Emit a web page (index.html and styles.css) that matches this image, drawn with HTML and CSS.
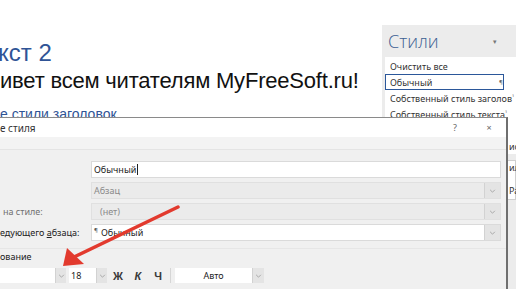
FILE: index.html
```html
<!DOCTYPE html>
<html lang="ru">

<head>
    <meta charset="UTF-8">
    <meta name="viewport" content="width=device-width, initial-scale=1.0">
    <title>Изменение стиля</title>
    <link rel="stylesheet" href="styles.css">
</head>

<body>

    <div class="doc">
        <div class="title2">кст 2</div>
        <p class="hello">ивет всем читателям MyFreeSoft.ru!</p>
        <p class="link">е стили заголовок</p>
    </div>

    <aside class="pane">
        <div class="pane-head"><span class="pane-name">Стили</span><span class="pin">▾</span></div>
        <ul class="style-list">
            <li>Очистить все</li>
            <li class="current"><span>Обычный</span><span class="mark">¶</span></li>
            <li><span>Собственный стиль заголов</span><span class="mark">¹</span></li>
            <li><span>Собственный стиль текста</span><span class="mark">¹</span></li>
            <li class="peek">ио</li>
        </ul>
        <div class="pane-box">
            <div class="peek">ил</div>
            <div class="peek">Ра</div>
        </div>
    </aside>

    <section class="dialog">
        <header class="dlg-title">
            <span class="dlg-name">е стиля</span>
            <button class="dlg-btn">?</button>
            <button class="dlg-btn">×</button>
        </header>
        <div class="dlg-body">
            <div class="group-top"></div>
            <div class="form">
                <label></label>
                <div class="field">Обычный<span class="caret"></span></div>

                <label></label>
                <div class="field off">
                    <span class="val">Абзац</span>
                    <span class="drop"><svg width="7" height="4" viewBox="0 0 8 5"><path d="M1 1l3 3 3-3" fill="none" stroke="#9a9a9a"/></svg></span>
                </div>

                <label class="dim">на стиле:</label>
                <div class="field off">
                    <span class="val indent">(нет)</span>
                    <span class="drop"><svg width="7" height="4" viewBox="0 0 8 5"><path d="M1 1l3 3 3-3" fill="none" stroke="#9a9a9a"/></svg></span>
                </div>

                <label><span>едующего <u>а</u>бзаца:</span></label>
                <div class="field">
                    <span class="val"><sup class="para">¶</sup>Обычный</span>
                    <span class="drop"><svg width="7" height="4" viewBox="0 0 8 5"><path d="M1 1l3 3 3-3" fill="none" stroke="#9a9a9a"/></svg></span>
                </div>
            </div>

            <div class="group-label">ование</div>

            <div class="toolbar">
                <div class="combo font-box">
                    <span class="box"></span>
                    <span class="drop"><svg width="7" height="4" viewBox="0 0 8 5"><path d="M1 1l3 3 3-3" fill="none" stroke="#9a9a9a"/></svg></span>
                </div>
                <div class="combo size-box">
                    <span class="box">18</span>
                    <span class="drop"><svg width="7" height="4" viewBox="0 0 8 5"><path d="M1 1l3 3 3-3" fill="none" stroke="#9a9a9a"/></svg></span>
                </div>
                <span class="fmt">Ж</span>
                <span class="fmt italic">К</span>
                <span class="fmt">Ч</span>
                <span class="sep"></span>
                <div class="combo color-box">
                    <span class="box">Авто</span>
                    <span class="drop"><svg width="7" height="4" viewBox="0 0 8 5"><path d="M1 1l3 3 3-3" fill="none" stroke="#9a9a9a"/></svg></span>
                </div>
            </div>
        </div>
    </section>

    <svg class="arrow" width="516" height="289" viewBox="0 0 516 289">
        <line x1="178" y1="207" x2="74" y2="257" stroke="#e23a2e" stroke-width="3.5" stroke-linecap="round"/>
        <polygon points="63,266 67,248 84,264" fill="#e23a2e"/>
    </svg>

</body>

</html>
```

FILE: styles.css
```css
body {
    margin: 0;
    width: 516px;
    height: 289px;
    overflow: hidden;
    position: relative;
    background-color: #ffffff;
    font-family: 'Liberation Sans', Arial, sans-serif;
}

.doc {
    padding-top: 39px;
}

.title2 {
    margin-left: -2px;
    font-size: 24px;
    line-height: 28px;
    color: #2f5496;
}

.hello {
    margin: 0;
    font-size: 22px;
    line-height: 28px;
    letter-spacing: -0.2px;
    color: #111111;
}

.link {
    margin: 9px 0 0 0;
    font-size: 14px;
    line-height: 20px;
    color: #2f5496;
}

/* панель стилей справа */

.pane {
    position: absolute;
    left: 382px;
    top: 25px;
    right: 0;
    bottom: 0;
    background-color: #ececec;
    font-family: 'Noto Sans', sans-serif;
    font-size: 9px;
    color: #333333;
}

.pane-head {
    height: 32px;
    display: flex;
    align-items: center;
    padding: 0 19px 0 6px;
}

.pane-name {
    flex: 1;
    font-family: 'Open Sans', sans-serif;
    font-weight: 300;
    font-size: 18px;
    color: #3d5f93;
}

.pin {
    font-size: 7px;
    color: #777777;
}

.style-list {
    list-style: none;
    margin: 0 0 0 3px;
    padding: 1px 0 0 0;
    background-color: #ffffff;
}

.style-list li {
    height: 16px;
    display: flex;
    align-items: center;
    padding-left: 5px;
    margin-right: 12px;
    box-sizing: border-box;
    white-space: nowrap;
}

.style-list .current {
    border: 1px solid #2b579a;
    padding-left: 4px;
}

.mark {
    margin-left: auto;
    font-size: 6px;
    color: #666666;
}

.style-list li.peek {
    margin-top: 16px;
    padding-left: 124px;
}

.pane-box {
    margin: 6px 0 0 123px;
    height: 40px;
    background-color: #ffffff;
    border: 1px solid #cfcfcf;
    box-sizing: border-box;
}

.pane-box .peek {
    padding-left: 3px;
    line-height: 12px;
    white-space: nowrap;
}

.pane-box .peek:first-child {
    margin-top: 1px;
}

.pane-box .peek + .peek {
    margin-top: 11px;
}

/* диалог */

.dialog {
    position: absolute;
    left: -10px;
    top: 117px;
    width: 515px;
    height: 171px;
    border: 1px solid #8a8a8a;
    border-right: 2px solid #6f6f6f;
    border-bottom: 0;
    background-color: #f0f0f0;
    font-family: 'Noto Sans', sans-serif;
    font-size: 9px;
    color: #222222;
    overflow: hidden;
    z-index: 2;
}

.dlg-title {
    height: 19px;
    display: flex;
    align-items: center;
    padding-left: 9px;
    background-color: #ffffff;
}

.dlg-name {
    flex: 1;
    font-size: 10px;
    color: #333333;
}

.dlg-btn {
    width: 34px;
    height: 19px;
    padding: 0;
    border: 0;
    background: none;
    font-family: 'Noto Sans', sans-serif;
    font-size: 9px;
    color: #666666;
}

.group-top {
    height: 12px;
    background-color: #f3f3f3;
    border-bottom: 1px solid #e4e4e4;
}

.form {
    display: grid;
    grid-template-columns: 100px 410px;
    grid-auto-rows: 17px;
    row-gap: 4px;
    margin-top: 11px;
}

.form label {
    display: flex;
    align-items: center;
    padding-left: 9px;
    white-space: nowrap;
}

.form label.dim {
    padding-left: 12px;
    color: #707070;
}

.field {
    display: flex;
    align-items: center;
    padding-left: 2px;
    border: 1px solid #dadada;
    background-color: #ffffff;
    box-sizing: border-box;
}

.field.off {
    background-color: #ebebeb;
    border-color: #e0e0e0;
    color: #8a8a8a;
}

.val {
    flex: 1;
}

.val.indent {
    padding-left: 6px;
}

.caret {
    width: 1px;
    height: 11px;
    margin-left: 1px;
    background-color: #222222;
}

.para {
    font-size: 6px;
    margin-right: 3px;
    color: #555555;
}

.drop {
    width: 15px;
    align-self: stretch;
    display: flex;
    align-items: center;
    justify-content: center;
    background-color: #e4e4e4;
    border-left: 1px solid #d2d2d2;
}

.group-label {
    height: 14px;
    margin-top: 7px;
    padding-left: 9px;
    display: flex;
    align-items: center;
    border-top: 1px solid #e6e6e6;
}

.toolbar {
    display: flex;
    align-items: center;
    height: 15px;
    margin-top: 5px;
}

.combo {
    display: flex;
    height: 15px;
}

.combo .box {
    background-color: #ffffff;
    display: flex;
    align-items: center;
}

.combo .drop {
    width: 10px;
}

.font-box .box {
    width: 64px;
}

.size-box {
    margin-left: 3px;
}

.size-box .box {
    width: 25px;
    padding-left: 2px;
}

.fmt {
    width: 20px;
    text-align: center;
    font-family: 'Liberation Sans', sans-serif;
    font-weight: bold;
    font-size: 11px;
    color: #3a3a3a;
}

.fmt:first-of-type {
    margin-left: 1px;
}

.italic {
    font-style: italic;
}

.sep {
    width: 1px;
    height: 15px;
    margin: 0 4px 0 2px;
    background-color: #d6d6d6;
}

.color-box .box {
    width: 77px;
    justify-content: center;
}

.color-box .drop {
    width: 11px;
}

.arrow {
    position: absolute;
    left: 0;
    top: 0;
    z-index: 3;
}
```
